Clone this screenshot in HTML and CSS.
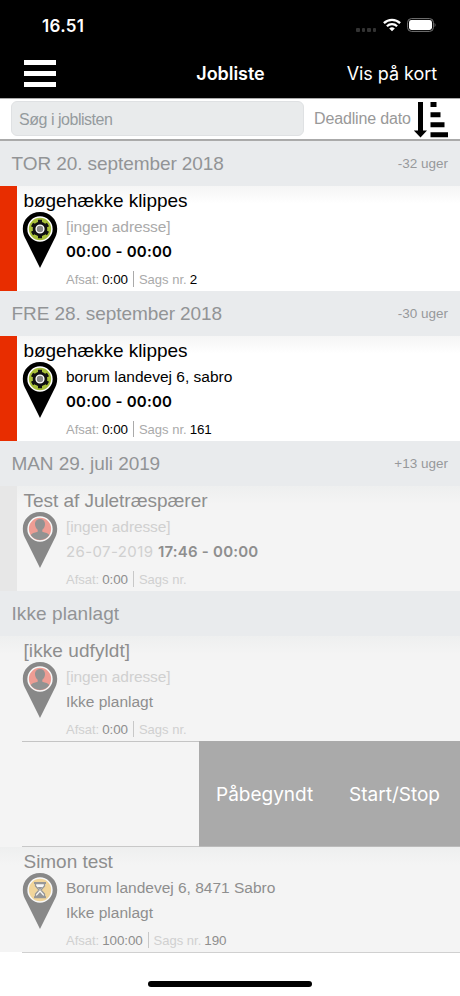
FILE: index.html
```html
<!DOCTYPE html>
<html lang="da">
<head>
<meta charset="utf-8">
<title>Jobliste</title>
<link rel="stylesheet" href="styles.css">
</head>
<body>
<svg class="defs" aria-hidden="true">
  <symbol id="pin" viewBox="0 0 36 57">
    <path fill="#000" d="M18 0C8.300 0 .8 7.500.8 16.700c0 4.600 1.500 8 3.300 11.300L18 56l13.900-28c1.800-3.300 3.300-6.700 3.300-11.300C35.200 7.500 27.700 0 18 0z"/>
  </symbol>
  <symbol id="pin-gear" viewBox="0 0 36 57">
    <use href="#pin"/>
    <circle cx="18" cy="17" r="11.900" fill="#a9c03a" stroke="#fff" stroke-width="1.500"/>
    <circle cx="18" cy="17" r="7.300" fill="#111"/>
    <path d="M18 7.800v18.400M10 12.400l16 9.200M26 12.400l-16 9.200" stroke="#111" stroke-width="4"/>
    <circle cx="18" cy="17" r="3.900" fill="#888" stroke="#fff" stroke-width="1.400"/>
  </symbol>
  <symbol id="pin-person" viewBox="0 0 36 57">
    <use href="#pin"/>
    <circle cx="18" cy="17" r="11.900" fill="#e8301c" stroke="#fff" stroke-width="1.500"/>
    <path fill="#161616" d="M18 7c-3.200 0-5 2.200-5 5 0 2.600 1.200 4.500 2.700 5.700v2.100c-3.200.9-6 1.600-7 3.300C10.700 26.200 14 27.900 18 27.900s7.300-1.700 9.300-4.800c-1-1.700-3.800-2.400-7-3.300v-2.100c1.500-1.200 2.700-3.100 2.700-5.700 0-2.800-1.800-5-5-5z"/>
  </symbol>
  <symbol id="pin-glass" viewBox="0 0 36 57">
    <use href="#pin"/>
    <circle cx="18" cy="17" r="11.900" fill="#efb02c" stroke="#fff" stroke-width="1.500"/>
    <path fill="#fff" stroke="#222" stroke-width="1.300" d="M13.500 10.500V13l3.600 4-3.600 4v2.500h9V21l-3.600-4 3.600-4v-2.500z"/>
    <path stroke="#222" stroke-width="2" d="M12 10h12M12 24.200h12"/>
    <path fill="#222" d="M15.500 14h5L18 16.800zM18 19l3.500 4h-7z"/>
  </symbol>
</svg>

<header class="top">
  <div class="status">
    <span class="clock">16.51</span>
    <div class="signals">
      <i class="dots"><b></b><b></b><b></b><b></b></i>
      <svg class="wifi" viewBox="0 0 18 14"><g fill="none" stroke="#fff" stroke-width="2.300"><path d="M.9 5.100a11.600 11.600 0 0 1 16.200 0"/><path d="M3.900 8.300a7.300 7.300 0 0 1 10.200 0"/></g><path fill="#fff" d="M9 13.200L6.200 10.500a4 4 0 0 1 5.600 0z"/></svg>
      <svg class="battery" viewBox="0 0 29 14"><rect x=".6" y=".6" width="25.800" height="12.800" rx="3.800" fill="none" stroke="#777" stroke-width="1"/><rect x="2" y="2" width="23" height="10" rx="2.400" fill="#fff"/><path d="M27.600 5c1.200.6 1.200 3.400 0 4z" fill="#777"/></svg>
    </div>
  </div>
  <nav class="nav">
    <div class="burger"><i></i><i></i><i></i></div>
    <h1>Jobliste</h1>
    <a>Vis på kort</a>
  </nav>
</header>

<div class="search">
  <div class="field">Søg i joblisten</div>
  <span class="sort">Deadline dato</span>
  <svg class="sort-icon" viewBox="0 0 36 37"><path d="M5 1h5v28.500h4L7.500 36.500.8 29.500H5zM17.500 1h6v5h-6zM17.500 11.300h10v5h-10zM17.500 21.300h14v5h-14zM17.500 31.300H35v5H17.500z"/></svg>
</div>

<main>
  <h2 class="day"><span>TOR 20. september 2018</span><small>-32 uger</small></h2>
  <article class="job late">
    <h3>bøgehække klippes</h3>
    <div class="body">
      <svg class="pin"><use href="#pin-gear"/></svg>
      <div class="info">
        <p class="address none">[ingen adresse]</p>
        <p class="time"><b>00:00 - 00:00</b></p>
        <p class="meta"><span>Afsat:</span><em>0:00</em><i></i><span>Sags nr.</span><em>2</em></p>
      </div>
    </div>
  </article>

  <h2 class="day"><span>FRE 28. september 2018</span><small>-30 uger</small></h2>
  <article class="job late">
    <h3>bøgehække klippes</h3>
    <div class="body">
      <svg class="pin"><use href="#pin-gear"/></svg>
      <div class="info">
        <p class="address">borum landevej 6, sabro</p>
        <p class="time"><b>00:00 - 00:00</b></p>
        <p class="meta"><span>Afsat:</span><em>0:00</em><i></i><span>Sags nr.</span><em>161</em></p>
      </div>
    </div>
  </article>

  <h2 class="day"><span>MAN 29. juli 2019</span><small>+13 uger</small></h2>
  <article class="job idle planned">
    <h3>Test af Juletræspærer</h3>
    <div class="body">
      <svg class="pin"><use href="#pin-person"/></svg>
      <div class="info">
        <p class="address none">[ingen adresse]</p>
        <p class="time"><span class="date">26-07-2019</span> <b>17:46 - 00:00</b></p>
        <p class="meta"><span>Afsat:</span><em>0:00</em><i></i><span>Sags nr.</span></p>
      </div>
    </div>
  </article>

  <h2 class="day"><span class="wide">Ikke planlagt</span></h2>
  <article class="job idle">
    <h3 class="wide">[ikke udfyldt]</h3>
    <div class="body">
      <svg class="pin"><use href="#pin-person"/></svg>
      <div class="info">
        <p class="address none">[ingen adresse]</p>
        <p class="unplanned">Ikke planlagt</p>
        <p class="meta"><span>Afsat:</span><em>0:00</em><i></i><span>Sags nr.</span></p>
      </div>
    </div>
  </article>
  <article class="swipe">
    <div class="rest"></div>
    <div class="actions"><a>Påbegyndt</a><a>Start/Stop</a></div>
  </article>
  <article class="job idle">
    <h3>Simon test</h3>
    <div class="body">
      <svg class="pin"><use href="#pin-glass"/></svg>
      <div class="info">
        <p class="address">Borum landevej 6, 8471 Sabro</p>
        <p class="unplanned">Ikke planlagt</p>
        <p class="meta"><span>Afsat:</span><em>100:00</em><i></i><span>Sags nr.</span><em>190</em></p>
      </div>
    </div>
  </article>
  <hr>
</main>
<footer><div class="home"></div></footer>
</body>
</html>
```
FILE: styles.css
```css
* { box-sizing: border-box; margin: 0; padding: 0; }
body {
  width: 460px;
  height: 996px;
  overflow: hidden;
  background: #fff;
  font-family: "Liberation Sans", Arial, sans-serif;
  color: #000;
  display: flex;
  flex-direction: column;
}
.defs { position: absolute; width: 0; height: 0; }

.top { height: 98px; background: #000; color: #fff; font-family: Inter, sans-serif; }
.status { height: 50px; display: flex; justify-content: space-between; padding: 0 24px 0 42px; }
.clock { font-size: 17px; font-weight: 600; line-height: 52px; letter-spacing: .3px; }
.signals { display: flex; align-items: flex-start; padding-top: 18px; }
.dots { display: flex; gap: 2px; padding-top: 10px; margin-right: 7px; }
.dots b { width: 3.5px; height: 4px; border-radius: 1px; background: #333; }
.wifi { width: 18px; height: 14px; margin-right: 6px; }
.battery { width: 29px; height: 14px; }
.nav { height: 48px; display: grid; grid-template-columns: 1fr auto 1fr; align-items: center; padding: 0 23px 1px 24px; }
.burger { display: flex; flex-direction: column; gap: 6px; }
.burger i { width: 32px; height: 5px; background: #fff; }
.nav h1 { font-size: 18px; font-weight: 600; letter-spacing: -.05px; }
.nav a { font-size: 18px; letter-spacing: -.05px; justify-self: end; }

.search { height: 43px; display: flex; align-items: flex-start; padding: 2px 11px 0; border-top: 1px solid #aaa; border-bottom: 2px solid #aaa; background: #fff; }
.field { width: 293px; height: 35px; border-radius: 6px; background: #e9ebec; border: 1px solid #dfe1e3; padding-left: 7px; line-height: 35px; font-size: 16px; color: #959b9e; letter-spacing: -.47px; }
.sort { margin-left: 10px; line-height: 36px; font-size: 16px; letter-spacing: -.15px; color: #999; white-space: nowrap; width: 99px; }
.sort-icon { width: 36px; height: 37px; }

.day { height: 45px; display: flex; justify-content: space-between; padding: 0 12px 0 11.5px; line-height: 45px; font-size: 19px; font-weight: 400; letter-spacing: -.08px; background: #e9ebed; color: #929496; }
.day small { font-size: 13.5px; letter-spacing: 0; color: #97999b; }

.job { height: 105px; padding: 4px 0 0 23.5px; background: linear-gradient(#f5f5f5, #fff 18px); }
.job h3 { height: 22px; line-height: 22px; font-size: 19px; font-weight: 400; letter-spacing: -.04px; }
.day .wide, .job .wide { letter-spacing: .08px; }
.late { border-left: 17px solid #e82d00; padding-left: 6.5px; }
.body { display: flex; height: 78px; }
.pin { width: 36px; height: 57px; margin: 0 8px 0 -1.5px; flex: none; }
.info { white-space: nowrap; }
.address { line-height: 29px; height: 27px; font-size: 15.5px; }
.none { color: #aaa; letter-spacing: -.1px; }
.time { height: 28px; line-height: 25px; font-family: Inter, sans-serif; font-size: 15px; letter-spacing: .22px; }
.date { letter-spacing: .4px; }
.time b { font-weight: 600; }
.unplanned { height: 28px; line-height: 25px; font-size: 15.5px; }
.meta { display: flex; align-items: center; height: 24px; font-size: 13.4px; }
.meta span { color: #aaa; font-size: 13px; }
.meta em { font-style: normal; margin-left: 3px; letter-spacing: -.1px; }
.meta i { width: 1px; height: 16px; background: #aaa; margin: 0 5px 0 5px; }

.idle { background: linear-gradient(#eeefef, #f4f4f4 18px); color: #8e8e8e; }
.idle .none, .idle .date, .idle .meta span { color: #d0d0d0; }
.idle .meta i { background: #c8c8c8; }
.idle .pin { opacity: .44; }
.planned { border-left: 17px solid #e7e7e7; padding-left: 6.5px; }

.swipe { height: 106px; display: flex; background: #f4f4f4; }
.rest { flex: 1; margin-left: 22px; border-top: 1px solid #c4c4c4; border-bottom: 1px solid #c8c8c8; }
.actions { width: 261px; background: #aaa; border-bottom: 1px solid #bbb; color: #fff; display: flex; align-items: center; justify-content: space-between; padding: 2px 20px 0 17px; font: 19px Inter, sans-serif; }
hr { border: 0; height: 1px; margin-left: 22px; background: #d0d0d0; }

footer { flex: 1; display: flex; justify-content: center; align-items: flex-end; padding-bottom: 9px; }
.home { width: 164px; height: 6px; border-radius: 3px; background: #000; }
```
